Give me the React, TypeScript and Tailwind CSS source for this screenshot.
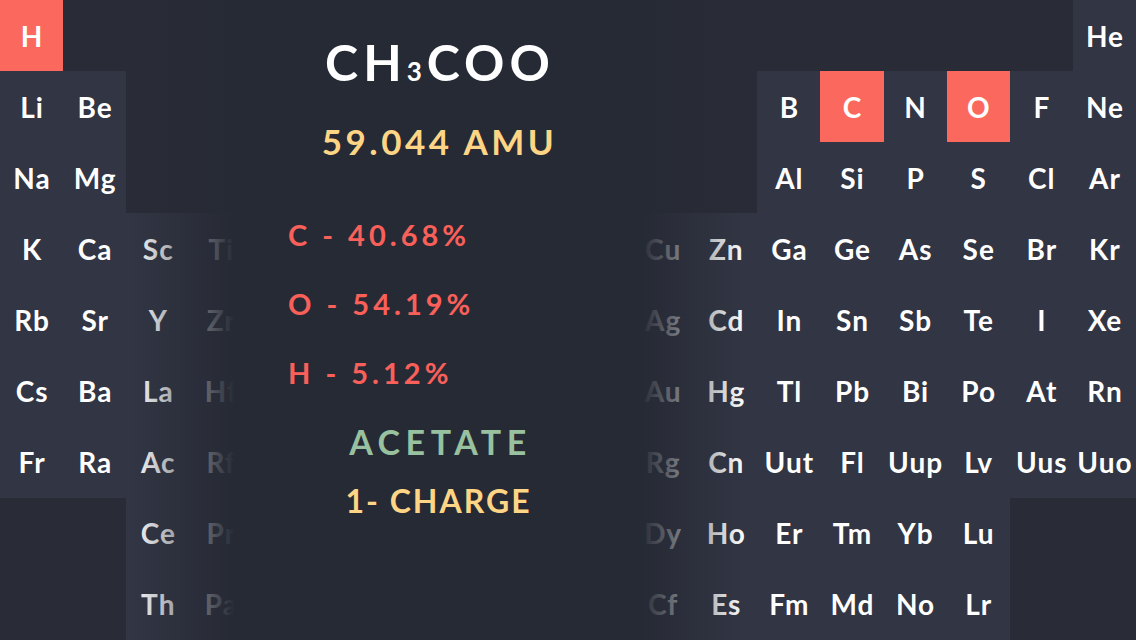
const rows: string[][] = [
  ["H", "", "", "", "", "", "", "", "", "", "", "", "", "", "", "", "", "He"],
  ["Li", "Be", "", "", "", "", "", "", "", "", "", "", "B", "C", "N", "O", "F", "Ne"],
  ["Na", "Mg", "", "", "", "", "", "", "", "", "", "", "Al", "Si", "P", "S", "Cl", "Ar"],
  ["K", "Ca", "Sc", "Ti", "V", "Cr", "Mn", "Fe", "Co", "Ni", "Cu", "Zn", "Ga", "Ge", "As", "Se", "Br", "Kr"],
  ["Rb", "Sr", "Y", "Zr", "Nb", "Mo", "Tc", "Ru", "Rh", "Pd", "Ag", "Cd", "In", "Sn", "Sb", "Te", "I", "Xe"],
  ["Cs", "Ba", "La", "Hf", "Ta", "W", "Re", "Os", "Ir", "Pt", "Au", "Hg", "Tl", "Pb", "Bi", "Po", "At", "Rn"],
  ["Fr", "Ra", "Ac", "Rf", "Db", "Sg", "Bh", "Hs", "Mt", "Ds", "Rg", "Cn", "Uut", "Fl", "Uup", "Lv", "Uus", "Uuo"],
  ["", "", "Ce", "Pr", "Nd", "Pm", "Sm", "Eu", "Gd", "Tb", "Dy", "Ho", "Er", "Tm", "Yb", "Lu", "", ""],
  ["", "", "Th", "Pa", "U", "Np", "Pu", "Am", "Cm", "Bk", "Cf", "Es", "Fm", "Md", "No", "Lr", "", ""],
];

// atoms in the selected compound
const selected = ["H", "C", "O"];

const composition = [
  { el: "C", pct: "40.68%" },
  { el: "O", pct: "54.19%" },
  { el: "H", pct: "5.12%" },
];

function Cell({ symbol }: { symbol: string }) {
  if (!symbol) return <div />;

  const active = selected.includes(symbol);

  return (
    <div
      className={`flex items-center justify-center pl-[1px] text-[28px] font-bold tracking-[1px] text-white ${
        active ? "bg-[#fb695e]" : "bg-[#323543]"
      }`}
    >
      {symbol}
    </div>
  );
}

export default function App() {
  return (
    <div
      className="relative h-[640px] w-[1136px] overflow-hidden bg-[#292c37]"
      style={{ fontFamily: "Lato, 'Open Sans', sans-serif" }}
    >
      {/* Table */}
      <div className="grid h-full grid-cols-18 grid-rows-9">
        {rows.map((row, r) =>
          row.map((symbol, c) => <Cell key={`${r}-${c}`} symbol={symbol} />)
        )}
      </div>

      {/* Compound panel, fades into the table at both sides */}
      <div className="absolute inset-y-0 left-[130px] flex w-[615px] flex-col bg-[linear-gradient(to_right,rgba(38,42,53,0),#262a35_17%,#262a35_83%,rgba(38,42,53,0))]">
        <h1 className="mt-[33px] pl-[5px] text-center text-[50px] font-bold leading-[58px] tracking-[5px] text-white">
          CH<span className="text-[26px]">3</span>COO
        </h1>

        <p className="mt-[20px] pl-[4px] text-center text-[35px] font-bold leading-[42px] tracking-[3.5px] text-[#fdd585]">
          59.044 AMU
        </p>

        <div className="mt-[56px] flex flex-col gap-[35px] pl-[158px]">
          {composition.map((item) => (
            <p
              key={item.el}
              className="text-[29px] font-bold leading-[34px] tracking-[4px] text-[#f9605a]"
            >
              {item.el} - {item.pct}
            </p>
          ))}
        </div>

        <p className="mt-[32px] pl-[6px] text-center text-[34px] font-bold leading-[40px] tracking-[5.5px] text-[#98c19f]">
          ACETATE
        </p>

        <p className="mt-[20px] pl-[2px] text-center text-[32px] font-bold leading-[38px] tracking-[2px] text-[#fdd585]">
          1- CHARGE
        </p>
      </div>
    </div>
  );
}
